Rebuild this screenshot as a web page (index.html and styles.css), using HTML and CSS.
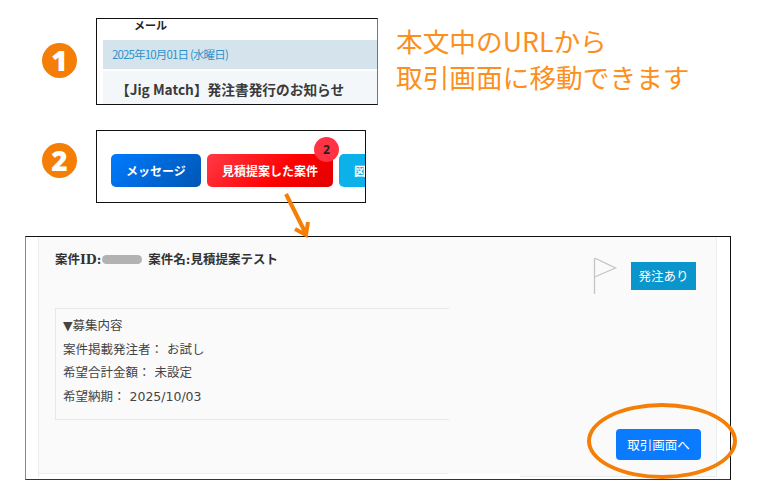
FILE: index.html
```html
<!DOCTYPE html>
<html lang="ja">
<head>
<meta charset="utf-8">
<title>案件</title>
<link rel="stylesheet" href="styles.css">
</head>
<body>
<main class="canvas">
  <div class="step step-one">1</div>
  <section class="panel mail">
    <div class="mail-head">メール</div>
    <div class="mail-date">2025年10月01日 (水曜日)</div>
    <div class="mail-title">【Jig Match】発注書発行のお知らせ</div>
  </section>
  <p class="note">本文中のURLから<br>取引画面に移動できます</p>

  <div class="step step-two">2</div>
  <section class="panel tabs">
    <button class="tab tab-blue">メッセージ</button>
    <button class="tab tab-red">見積提案した案件<span class="badge">2</span></button>
    <button class="tab tab-cyan">図</button>
  </section>

  <svg class="arrow" width="40" height="50" viewBox="0 0 40 50">
    <path d="M5 1 L24 39" class="arrow-line"/>
    <path d="M14 36 L25 42 L27 29" class="arrow-line"/>
  </svg>

  <section class="panel detail">
    <div class="card">
      <div class="card-top">
        <h2 class="case-title">案件ID:<span class="mask"></span>案件名:見積提案テスト</h2>
        <div class="status">
          <svg class="flag" width="26" height="40" viewBox="0 0 26 40">
            <path d="M1.5 0 V36 M1.5 0 L22.5 10 L1.5 19"/>
          </svg>
          <span class="order-tag">発注あり</span>
        </div>
      </div>
      <div class="recruit">
        <div>▼募集内容</div>
        <div>案件掲載発注者： お試し</div>
        <div>希望合計金額： 未設定</div>
        <div>希望納期： 2025/10/03</div>
      </div>
      <div class="card-foot"><button class="go">取引画面へ</button></div>
    </div>
    <div class="cut-left"></div>
    <div class="cut-mid"></div>
  </section>

  <div class="ring"></div>
</main>
</body>
</html>
```
FILE: styles.css
```css
* { box-sizing: border-box; }
html, body { margin: 0; padding: 0; background: #fff; }
body { font-family: "Noto Sans CJK JP", "Noto Sans", sans-serif; }
.canvas { position: relative; width: 770px; height: 500px; overflow: hidden; }

.step {
  position: absolute; left: 42px; width: 35px; height: 35px; border-radius: 50%;
  background: #f57f06; color: #fff; font: 900 28px/34px "Noto Sans", sans-serif; text-align: center;
}
.step-one { top: 43px; }
.step-two { top: 143px; }

.panel { position: absolute; background: #fff; border: 1px solid #111; overflow: hidden; }

.mail { left: 96px; top: 18px; width: 282px; height: 87px; border-right-color: #777; padding-left: 6px; }
.mail-head { height: 21px; padding-left: 31px; font-size: 11px; line-height: 13px; font-weight: 700; color: #222; }
.mail-date { height: 29px; background: #d5e4ec; padding-left: 9px; font: 11.5px/28px "Noto Sans CJK JP", sans-serif; letter-spacing: -0.85px; color: #2b93cb; }
.mail-title { height: 40px; margin-top: 2px; background: #f3f7fa; padding: 10px 0 0 13px; font-size: 13.7px; line-height: 17px; font-weight: 700; color: #3a3a3a; white-space: nowrap; }

.note { position: absolute; left: 396px; top: 23px; margin: 0; font-size: 26.7px; line-height: 36px; font-weight: 400; color: #fb8f20; }

.tabs { left: 96px; top: 130px; width: 270px; height: 73px; display: flex; gap: 6px; padding: 23px 0 0 14px; }
.tab { position: relative; flex: none; height: 33px; border: 0; border-radius: 5px; padding: 0; color: #fff; font: 700 12px/33px "Noto Sans CJK JP", sans-serif; }
.tab-blue { width: 90px; background: linear-gradient(135deg, #007bff, #0056b3); }
.tab-red { width: 126px; background: linear-gradient(135deg, #ff3b47, #ff0000 60%, #e00000); }
.tab-cyan { width: 40px; background: #0bb1e8; text-align: left; padding-left: 15px; }
.badge { position: absolute; left: 107px; top: -17px; width: 25px; height: 25px; border-radius: 50%; background: #ff3344; color: #222; font: 700 12px/25px "Noto Sans", sans-serif; text-align: center; }

.arrow { position: absolute; left: 281px; top: 193px; z-index: 2; }
.arrow-line { fill: none; stroke: #f57f06; stroke-width: 4; }

.detail { left: 25px; top: 236px; width: 706px; height: 244px; border-left-color: #888; border-bottom-color: #333; padding-left: 12px; }
.card { width: 679px; height: 240px; background: #fafafa; border: 1px solid #e9edf0; border-top: 0; padding: 0 16px; }
.card-top { display: flex; justify-content: space-between; height: 71px; }
.case-title { margin: 14px 0 0; font: 700 12.5px/18px "DejaVu Serif", "Noto Sans CJK JP", serif; color: #333; white-space: nowrap; }
.mask { display: inline-block; width: 40px; height: 9px; margin: 0 6px 0 1px; border-radius: 5px; background: #b2b2b2; }
.status { display: flex; gap: 12px; align-items: flex-start; padding-top: 21px; padding-right: 4px; }
.flag { fill: none; stroke: #c4c4c4; stroke-width: 1.3; }
.order-tag { width: 65px; height: 28px; margin-top: 4px; background: #0a95cc; color: #fff; text-align: center; font: 12.5px/27px "Noto Sans CJK JP", sans-serif; }
.recruit { width: 394px; height: 112px; border: 1px solid #e4e8ec; border-right: 0; padding: 5px 7px; font: 12.5px/23.5px "DejaVu Sans", "Noto Sans CJK JP", sans-serif; color: #444; white-space: nowrap; }
.card-foot { display: flex; justify-content: flex-end; padding-top: 9px; margin-right: -1px; }
.go { width: 85px; height: 31px; border: 0; border-radius: 4px; background: #0a7bff; color: #fff; font: 12.5px/30px "Noto Sans CJK JP", sans-serif; padding: 0; }

.cut-left { position: absolute; left: 13px; top: 236px; width: 409px; height: 8px; background: #fff; border-top: 1px solid #e9edf0; }
.cut-mid { position: absolute; left: 422px; top: 236px; width: 72px; height: 8px; background: #fff; }

.ring { position: absolute; left: 587px; top: 403px; width: 150px; height: 76px; border: 4px solid #f57f06; border-radius: 50%; z-index: 3; }
```
